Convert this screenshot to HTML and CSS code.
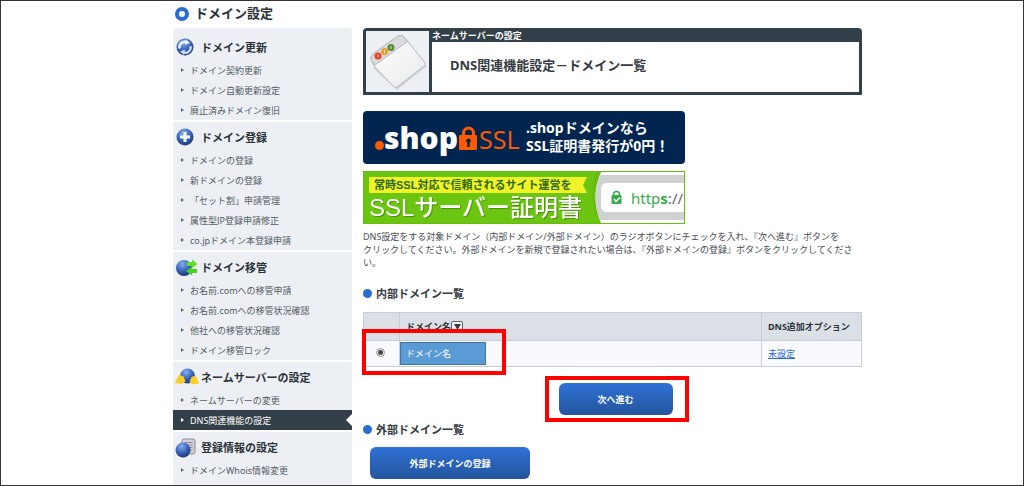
FILE: index.html
```html
<!DOCTYPE html>
<html lang="ja">
<head>
<meta charset="utf-8">
<title>DNS関連機能設定－ドメイン一覧</title>
<link rel="stylesheet" href="styles.css">
</head>
<body>
<svg class="defs" width="0" height="0" aria-hidden="true">
  <defs>
    <radialGradient id="ball" cx="0.4" cy="0.25" r="0.8">
      <stop offset="0" stop-color="#86aee8"/>
      <stop offset="0.5" stop-color="#3c69bd"/>
      <stop offset="1" stop-color="#18306f"/>
    </radialGradient>
    <linearGradient id="paper" x1="0" y1="0" x2="1" y2="1">
      <stop offset="0" stop-color="#ffffff"/>
      <stop offset="1" stop-color="#e9eaec"/>
    </linearGradient>
  </defs>
</svg>
<div class="page">
  <div class="layout">
    <nav class="sidebar">
      <h1 class="sidebar-title"><span class="ring"></span>ドメイン設定</h1>
      <section class="group group-first">
        <h2 class="group-title">
          <svg class="group-icon" viewBox="0 0 24 20"><circle cx="10" cy="9" r="8.500" fill="url(#ball)"/><path d="M4.500 10.500a5.500 5.500 0 0 1 7-6.500" fill="none" stroke="#eef4fd" stroke-width="2.400"/><path d="M11 1.500l4 3.500-5 2z" fill="#eef4fd"/><path d="M15.500 8a5.500 5.500 0 0 1-7 6.500" fill="none" stroke="#c5d8f4" stroke-width="2.400"/><path d="M9 17l-4-3.500 5-2z" fill="#c5d8f4"/></svg>
          ドメイン更新</h2>
        <ul class="links">
          <li><a href="#">ドメイン契約更新</a></li>
          <li><a href="#">ドメイン自動更新設定</a></li>
          <li><a href="#">廃止済みドメイン復旧</a></li>
        </ul>
      </section>
      <section class="group">
        <h2 class="group-title">
          <svg class="group-icon" viewBox="0 0 24 20"><circle cx="10" cy="9" r="8.500" fill="url(#ball)"/><path d="M8.500 4h3v3.500H15v3h-3.500V14h-3v-3.500H5v-3h3.500z" fill="#fff"/></svg>
          ドメイン登録</h2>
        <ul class="links">
          <li><a href="#">ドメインの登録</a></li>
          <li><a href="#">新ドメインの登録</a></li>
          <li><a href="#">「セット割」申請管理</a></li>
          <li><a href="#">属性型JP登録申請修正</a></li>
          <li><a href="#">co.jpドメイン本登録申請</a></li>
        </ul>
      </section>
      <section class="group">
        <h2 class="group-title">
          <svg class="group-icon" viewBox="0 0 24 20"><circle cx="9" cy="10" r="8" fill="url(#ball)"/><path d="M12 4h5V1.500l5.500 4.500-5.500 4V8h-5z" fill="#5fe02c"/><path d="M22 11h-5V8.500L11 13l6 4.500V15h5z" fill="#45d31d"/></svg>
          ドメイン移管</h2>
        <ul class="links">
          <li><a href="#">お名前.comへの移管申請</a></li>
          <li><a href="#">お名前.comへの移管状況確認</a></li>
          <li><a href="#">他社への移管状況確認</a></li>
          <li><a href="#">ドメイン移管ロック</a></li>
        </ul>
      </section>
      <section class="group">
        <h2 class="group-title">
          <svg class="group-icon" viewBox="0 0 24 20"><circle cx="12.500" cy="8" r="7.500" fill="url(#ball)"/><path d="M4 6.500l4.500 2 2 5-4 2.500L0 15z" fill="#f9cf27"/><path d="M20.500 7.500l3.500 8-6.500 1-3-2.500 2-5z" fill="#f9cf27"/></svg>
          ネームサーバーの設定</h2>
        <ul class="links">
          <li><a href="#">ネームサーバーの変更</a></li>
          <li class="current"><a href="#" aria-current="page">DNS関連機能の設定</a></li>
        </ul>
      </section>
      <section class="group group-last">
        <h2 class="group-title">
          <svg class="group-icon" viewBox="0 0 24 20"><rect x="7" y="1" width="13" height="15" rx="2" fill="#d3d0d8" stroke="#8d8995"/><path d="M9.500 4.500h8M9.500 7h8M9.500 9.500h8M9.500 12h8" stroke="#8d8995"/><circle cx="8" cy="12" r="7.500" fill="url(#ball)"/></svg>
          登録情報の設定</h2>
        <ul class="links">
          <li><a href="#">ドメインWhois情報変更</a></li>
        </ul>
      </section>
    </nav>

    <main class="content">
      <header class="masthead">
        <div class="masthead-icon">
          <svg viewBox="0 0 63 61" width="63" height="61">
            <path d="M7 37L31 59 61 35 40 8z" fill="#9da0a5" opacity="0.350"/>
            <path d="M5 29Q4 25 8 22L32 5Q36 3 39 7L59 32Q60 34 58 35L31 56Q29 57 27 55L9 36z" fill="url(#paper)" stroke="#b9bbbf"/>
            <path d="M5 29Q4 25 8 22L32 5Q36 3 39 7L41 11 9 34z" fill="#d9dbde" stroke="#b9bbbf"/>
            <circle cx="12" cy="25" r="3.500" fill="#e9401f"/><circle cx="18.500" cy="20.500" r="3.500" fill="#f19b2b"/><circle cx="25" cy="16.500" r="3.500" fill="#5b8c33"/>
            <path d="M12 23.500v3M18.500 19v3M25 15v3" stroke="#fff" stroke-width="0.800"/>
          </svg>
        </div>
        <div class="masthead-body">
          <p class="masthead-label">ネームサーバーの設定</p>
          <h2 class="masthead-title">DNS関連機能設定－ドメイン一覧</h2>
        </div>
      </header>

      <div class="banners">
        <a class="banner banner-shop" href="#">
          <svg viewBox="0 0 322 53" width="322" height="53" role="img" aria-label=".shop SSL">
            <circle cx="16.500" cy="34.500" r="4.500" fill="#ff5a00"/>
            <text class="shop-logo" x="21" y="38">shop</text>
            <path d="M100.500 26v-4a5 5 0 0 1 10 0v4" fill="none" stroke="#ff5a00" stroke-width="3"/>
            <rect x="96" y="24" width="18" height="15" rx="1" fill="#ff5a00"/>
            <path d="M105.500 27.500a2.300 2.300 0 0 1 1.200 4.300V36h-2.400v-4.200a2.300 2.300 0 0 1 1.200-4.300z" fill="#002551"/>
            <text class="shop-ssl" x="116" y="38">SSL</text>
            <text class="shop-copy" x="163" y="22">.shopドメインなら</text>
            <text class="shop-copy" x="163" y="40">SSL証明書発行が0円！</text>
          </svg>
        </a>
        <a class="banner banner-ssl" href="#">
          <svg viewBox="0 0 322 53" width="322" height="53" role="img" aria-label="SSLサーバー証明書">
            <rect width="322" height="53" fill="#66bd10"/>
            <path d="M1 1h232q-10 26 4 51H1z" fill="#6cc511"/>
            <path d="M238 1h83v51h-83q-11-26 0-51z" fill="#fff"/>
            <path d="M237 4h84v45h-84q-9-22 0-45z" fill="#cfd1d3"/>
            <path d="M321 12h-77q-6 0-6 6v17q0 6 6 6h77z" fill="#fff"/>
            <path d="M6 6h218l-4 8 4 8H6z" fill="#f1f32a"/>
            <text class="ssl-copy" x="11" y="18">常時SSL対応で信頼されるサイト運営を</text>
            <text class="ssl-name" x="6" y="45">SSLサーバー証明書</text>
            <path d="M250.500 25v-1.500a3 3 0 0 1 6 0V25" fill="none" stroke="#35ab4d" stroke-width="1.500"/>
            <rect x="248.500" y="24" width="10" height="9" rx="1" fill="#35ab4d"/>
            <path d="M251 28l2 2.500 4-4" fill="none" stroke="#fff" stroke-width="1.500"/>
            <text class="ssl-url" x="268" y="33">http<tspan>s</tspan><tspan class="muted">://</tspan></text>
            <rect x="0.500" y="0.500" width="321" height="52" fill="none" stroke="#66bd10"/>
          </svg>
        </a>
      </div>

      <p class="lead">DNS設定をする対象ドメイン（内部ドメイン/外部ドメイン）のラジオボタンにチェックを入れ、『次へ進む』ボタンを<br>クリックしてください。外部ドメインを新規で登録されたい場合は、『外部ドメインの登録』ボタンをクリックしてください。</p>

      <h3 class="section-title">内部ドメイン一覧</h3>
      <div class="table-wrap">
        <table class="domains">
          <thead>
            <tr>
              <th class="col-pick"></th>
              <th><span class="sort">ドメイン名<button class="filter" type="button" aria-label="絞り込み"><svg viewBox="0 0 7 6" width="7" height="6"><path d="M0 0h7L3.500 6z" fill="#333b42"/></svg></button></span></th>
              <th class="col-option">DNS追加オプション</th>
            </tr>
          </thead>
          <tbody>
            <tr>
              <td class="col-pick"><input class="radio" type="radio" name="domain" id="domain-1" checked></td>
              <td class="col-name"><label class="mask" for="domain-1">ドメイン名</label></td>
              <td><a class="link" href="#">未設定</a></td>
            </tr>
          </tbody>
        </table>
        <span class="highlight highlight-row"></span>
      </div>

      <div class="actions">
        <span class="action">
          <button class="button button-next" type="button">次へ進む</button>
          <span class="highlight highlight-button"></span>
        </span>
      </div>

      <h3 class="section-title">外部ドメイン一覧</h3>
      <button class="button button-register" type="button">外部ドメインの登録</button>
    </main>
  </div>
</div>
</body>
</html>
```
FILE: styles.css
```css
* {
  box-sizing: border-box;
}

body,
h1,
h2,
h3,
p,
ul {
  margin: 0;
  padding: 0;
}

body {
  background: #fff;
  color: #444b52;
  font: 9px/13px "Noto Sans", "Noto Sans CJK JP", sans-serif;
}

.defs {
  position: absolute;
}

.page {
  display: flex;
  height: 100vh;
  overflow: hidden;
  border: 1px solid #363438;
}

.layout {
  display: flex;
  gap: 11px;
  width: 100%;
  max-width: 861px;
  padding-left: 172px;
}

/* Sidebar */

.sidebar {
  display: flex;
  flex-direction: column;
  flex: 0 0 179px;
  gap: 2px;
}

.sidebar-title {
  display: flex;
  align-items: center;
  gap: 6px;
  height: 25px;
  padding-left: 2px;
  color: #2b3238;
  font-size: 13px;
  font-weight: 700;
}

.ring {
  width: 14px;
  height: 14px;
  border: 4px solid #2c6bd0;
  border-radius: 50%;
}

.group {
  background: #ecf0f5;
}

.group-first {
  padding-top: 4px;
  border-radius: 4px 4px 0 0;
}

.group-last {
  flex: 1;
}

.group-title {
  display: flex;
  align-items: center;
  gap: 2px;
  height: 28px;
  padding: 3px 0 0 2px;
  color: #2b3238;
  font-size: 11px;
  font-weight: 700;
}

.group-icon {
  flex: none;
  width: 24px;
  height: 20px;
}

.links {
  list-style: none;
}

.links li {
  display: flex;
  align-items: center;
  gap: 6px;
  height: 20px;
  padding-left: 8px;
}

.links li::before {
  content: "";
  border: 2px solid transparent;
  border-right: 0;
  border-left: 3px solid #5d686f;
}

.links a {
  color: #535a61;
  text-decoration: none;
}

.links .current {
  background: #344049;
}

.links .current a {
  color: #fff;
}

.links .current::before {
  border-left-color: #fff;
}

.links .current::after {
  content: "";
  margin-left: auto;
  border: 6px solid transparent;
  border-left: 0;
  border-right-color: #fff;
}

/* Main column */

.content {
  flex: 1;
  min-width: 0;
  padding-top: 27px;
}

.masthead {
  display: flex;
  gap: 3px;
  padding: 3px;
  border-radius: 4px 4px 0 0;
  background: #344049;
}

.masthead-icon {
  display: flex;
  background: #ecf0f5;
}

.masthead-body {
  display: flex;
  flex: 1;
  flex-direction: column;
}

.masthead-label {
  height: 11px;
  color: #fff;
  font-weight: 700;
  line-height: 9px;
}

.masthead-title {
  display: flex;
  flex: 1;
  align-items: center;
  padding: 0 0 3px 18px;
  background: #fff;
  color: #343b42;
  font-size: 13px;
  font-weight: 700;
}

.banners {
  display: flex;
  flex-direction: column;
  align-items: flex-start;
  gap: 7px;
  margin-top: 16px;
}

.banner {
  display: flex;
  overflow: hidden;
}

.banner-shop {
  border-radius: 4px;
  background: #002551;
}

.shop-logo {
  fill: #fff;
  font: 800 30px "Open Sans", sans-serif;
}

.shop-ssl {
  fill: #ff5a00;
  font: 400 25px "Open Sans", sans-serif;
}

.shop-copy {
  fill: #fff;
  font: 700 14px "Noto Sans", "Noto Sans CJK JP", sans-serif;
}

.ssl-copy {
  fill: #2d6a0c;
  font: 700 11px "Liberation Sans", "Noto Sans CJK JP", sans-serif;
}

.ssl-name {
  fill: #fff;
  font: 500 24px "Liberation Sans", "Noto Sans CJK JP", sans-serif;
  filter: drop-shadow(1px 1px 0 #489406);
}

.ssl-url {
  fill: #35ab4d;
  font: 400 15px "Noto Sans", sans-serif;
}

.ssl-url tspan {
  font-weight: 700;
}

.ssl-url .muted {
  fill: #666;
  font-weight: 400;
}

.lead {
  margin-top: 6px;
}

.section-title {
  display: flex;
  align-items: center;
  gap: 4px;
  height: 17px;
  color: #343b42;
  font-size: 11px;
  font-weight: 700;
}

.section-title::before {
  content: "";
  width: 9px;
  height: 9px;
  border-radius: 50%;
  background: #2c6bd0;
}

.lead + .section-title {
  margin-top: 16px;
}

.table-wrap {
  position: relative;
  margin-top: 10px;
}

.domains {
  width: 100%;
  border-collapse: collapse;
}

.domains th,
.domains td {
  padding: 0 6px;
  border: 1px solid #c8cdd1;
  text-align: left;
}

.domains th {
  height: 28px;
  background: #dbe0e6;
  color: #2b3238;
  font-weight: 700;
}

.domains td {
  height: 26px;
  background: #f8faff;
}

.domains .col-pick {
  width: 36px;
  padding: 0 3px 2px 0;
}

.domains .col-option {
  width: 100px;
}

.domains .col-name {
  padding: 0 0 1px;
}

.sort {
  display: flex;
  align-items: center;
}

.filter {
  display: flex;
  align-items: center;
  justify-content: center;
  width: 12px;
  height: 12px;
  padding: 0;
  border: 1px solid #596168;
  border-radius: 2px;
  background: #f2f4f6;
}

.radio {
  display: block;
  appearance: none;
  width: 9px;
  height: 9px;
  margin: 0 auto;
  border: 1px solid #999;
  border-radius: 50%;
  background: radial-gradient(circle, #4a4a4a 0 2px, #ececec 3px);
}

.mask {
  display: flex;
  align-items: center;
  width: 86px;
  height: 23px;
  padding-left: 5px;
  border: 1px solid #41719c;
  background: #5b9bd5;
  color: #fff;
}

.link {
  color: #2c6bd0;
}

.highlight {
  position: absolute;
  width: 144px;
  height: 46px;
  border: 4px solid #f00;
  pointer-events: none;
}

.highlight-row {
  top: 17px;
  left: -1px;
}

.highlight-button {
  top: -7px;
  left: -14px;
}

.actions {
  display: flex;
  justify-content: center;
  margin-top: 16px;
  padding-left: 6px;
}

.action {
  position: relative;
}

.button {
  display: block;
  height: 32px;
  border: 0;
  border-radius: 6px;
  background: linear-gradient(#2f71d6, #24559c);
  color: #fff;
  font: inherit;
  font-weight: 700;
}

.button-next {
  width: 114px;
}

.actions + .section-title {
  margin-top: 6px;
}

.button-register {
  width: 160px;
  margin: 9px 0 0 7px;
}
```
